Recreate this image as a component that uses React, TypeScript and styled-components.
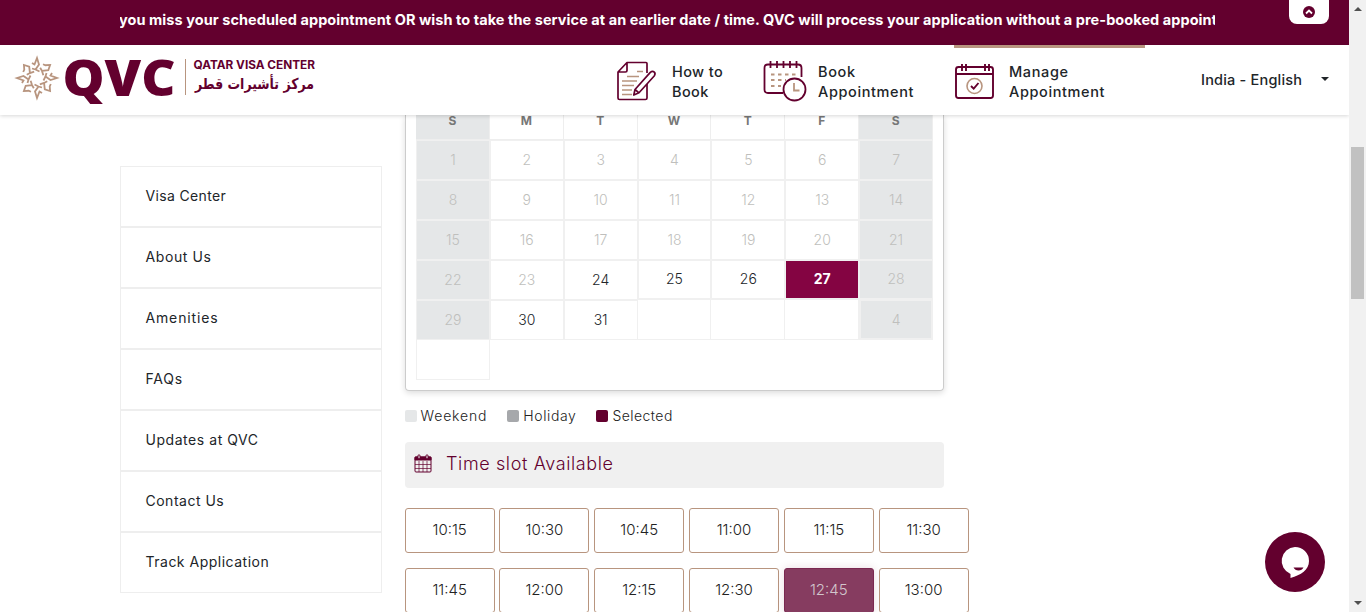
import React from 'react';
import styled, { createGlobalStyle, css } from 'styled-components';

const MAROON = '#63002e';
const TAN = '#b8957f';

const GlobalStyle = createGlobalStyle`
  * { box-sizing: border-box; }
  body {
    margin: 0;
    overflow: hidden;
    background: #fff;
    color: #212529;
    font-family: Inter, "Liberation Sans", sans-serif;
  }
`;

const Window = styled.div`
  display: flex;
  width: 1366px;
  height: 612px;
  overflow: hidden;
`;

const Page = styled.div`
  position: relative;
  display: flex;
  flex-direction: column;
  width: 1349px;
  height: 612px;
  overflow: hidden;
`;

const Banner = styled.div`
  display: flex;
  flex: none;
  height: 45px;
  padding-left: 120px;
  background: ${MAROON};
`;

const Marquee = styled.div`
  width: 1095px;
  height: 40px;
  overflow: hidden;
  white-space: nowrap;
  color: #fff;
  font-size: 14.5px;
  font-weight: 700;
  line-height: 40px;
  letter-spacing: 0.06px;
  text-indent: -1px;
`;

const CollapseButton = styled.button`
  display: flex;
  align-items: center;
  justify-content: center;
  width: 40px;
  height: 24px;
  margin-left: 74px;
  padding: 0;
  border: 0;
  border-radius: 0 0 8px 8px;
  background: #fff;
`;

const Nav = styled.header`
  z-index: 1;
  display: flex;
  flex: none;
  height: 70px;
  padding-left: 14px;
  background: #fff;
  box-shadow: 0 1px 4px rgba(0, 0, 0, 0.16);
`;

const Menu = styled.nav`
  display: flex;
  margin-left: 300px;
`;

const MenuItem = styled.a<{ $width: number; $active?: boolean }>`
  display: flex;
  gap: 11px;
  width: ${(p) => p.$width}px;
  padding-top: ${(p) => (p.$active ? 14 : 17)}px;
  border-top: ${(p) => (p.$active ? `3px solid ${TAN}` : '0')};
  svg { flex: none; margin-top: -3px; }
`;

const MenuLabel = styled.span<{ $spacing?: number }>`
  font-size: 14.5px;
  font-weight: 500;
  line-height: 20px;
  letter-spacing: ${(p) => p.$spacing ?? 0}px;
  white-space: pre;
`;

const Language = styled.div`
  display: flex;
  align-items: center;
  gap: 19px;
  height: 70px;
  margin-left: 56px;
`;

const Caret = styled.i`
  margin-top: -2px;
  border: 4px solid transparent;
  border-top-color: #212529;
  border-bottom: 0;
`;

const Content = styled.main`
  display: flex;
  align-items: flex-start;
  gap: 23px;
  padding-left: 120px;
`;

const Sidebar = styled.aside`
  width: 262px;
  margin-top: 51px;
`;

const SideLink = styled.a<{ $spacing: number }>`
  display: block;
  height: 61px;
  padding-left: 24.5px;
  border: 1px solid #eee;
  font-size: 14px;
  line-height: 58px;
  letter-spacing: ${(p) => p.$spacing}px;
`;

const Booking = styled.section`
  width: 570px;
`;

const CalendarCard = styled.div`
  width: 539px;
  height: 276px;
  padding: 0 10px;
  border: 1px solid #ccc;
  border-top: 0;
  border-radius: 0 0 4px 4px;
  box-shadow: 0 2px 6px rgba(0, 0, 0, 0.14);
`;

const Grid = styled.div`
  display: grid;
  grid-template-columns: repeat(7, 1fr);
  grid-template-rows: 25px repeat(6, 40px);
  width: 517px;
`;

const Weekday = styled.div<{ $weekend?: boolean }>`
  border: solid #eee;
  border-width: 0 1px 1px 0;
  background: ${(p) => (p.$weekend ? '#e5e7e8' : '#fff')};
  color: #777;
  font-size: 12px;
  font-weight: 700;
  line-height: 12px;
  text-align: center;
`;

type Kind = 'off' | 'weekend' | 'open' | 'short' | 'selected' | 'blank' | 'weekendShort' | 'weekendInset' | 'first';

const Day = styled.div<{ $kind: Kind }>`
  height: 40px;
  border: 1px solid #f0f0f0;
  background: #fff;
  color: #bfbfbd;
  font-size: 14px;
  font-weight: 300;
  line-height: 37px;
  text-align: center;
  ${(p) => p.$kind.startsWith('weekend') && css`background: #e5e7e8;`}
  ${(p) => (p.$kind === 'open' || p.$kind === 'short') && css`color: #212529;`}
  ${(p) => (p.$kind === 'short' || p.$kind === 'selected' || p.$kind === 'weekendShort') && css`
    height: 39px;
    line-height: 35px;
  `}
  ${(p) => p.$kind === 'selected' && css`background: #840442; color: #fff; font-weight: 700;`}
  ${(p) => p.$kind === 'weekendInset' && css`
    height: 41px;
    margin-top: -1px;
    border-width: 2px;
  `}
  ${(p) => p.$kind === 'blank' && css`height: 41px; margin-top: -1px; border-left: 0;`}
  ${(p) => p.$kind === 'first' && css`border-top: 0;`}
`;

const Legend = styled.div`
  display: flex;
  gap: 20px;
  height: 20px;
  margin: 15px 0 0 -0.5px;
`;

const LegendItem = styled.span<{ $spacing: number }>`
  display: flex;
  align-items: center;
  gap: 4px;
  height: 19px;
  font-size: 14px;
  font-weight: 300;
  color: #222;
  letter-spacing: ${(p) => p.$spacing}px;
`;

const Swatch = styled.i<{ $color: string }>`
  width: 12px;
  height: 12px;
  border-radius: 2px;
  background: ${(p) => p.$color};
`;

const SlotHeading = styled.h2`
  display: flex;
  align-items: center;
  gap: 14px;
  width: 539px;
  height: 46px;
  margin: 16px 0 20px;
  padding: 0 9px 3px;
  border-radius: 4px;
  background: #f0f0f0;
  color: ${MAROON};
  font-size: 18px;
  font-weight: 300;
  letter-spacing: 0.62px;
`;

const Slots = styled.div`
  display: grid;
  grid-template-columns: repeat(6, 90px);
  gap: 15px 4.8px;
  margin-left: -0.4px;
`;

const Slot = styled.button<{ $selected?: boolean }>`
  height: 45px;
  padding: 0 0 2px;
  border: 1px solid ${TAN};
  border-radius: 3px;
  background: #fff;
  color: #222;
  font: 300 15px Inter, "Liberation Sans", sans-serif;
  ${(p) => p.$selected && css`
    border-color: #7a2850;
    background: #863c60;
    color: #d2c6cc;
    box-shadow: 0 0 10px rgba(99, 0, 46, 0.14);
  `}
`;

const ChatButton = styled.button`
  position: absolute;
  right: 24px;
  bottom: 20px;
  width: 60px;
  height: 60px;
  padding: 0;
  border: 0;
  border-radius: 50%;
  background: ${MAROON};
`;

const Scrollbar = styled.div`
  display: flex;
  flex-direction: column;
  align-items: center;
  width: 17px;
  height: 612px;
  background: #f1f1f1;
`;

const ScrollArrow = styled.i<{ $down?: boolean }>`
  margin-top: ${(p) => (p.$down ? 302 : 7)}px;
  border: 4px solid transparent;
  ${(p) => (p.$down ? 'border-top-color: #505050; border-bottom: 0;' : 'border-bottom-color: #505050; border-top: 0;')}
`;

const Thumb = styled.div`
  width: 13px;
  height: 152px;
  margin-top: 136px;
  background: #c1c1c1;
`;

const Logo = () => (
  <svg width="303" height="70" viewBox="14 45 303 70">
    <g transform="translate(37 78)" fill="none" stroke={TAN} strokeWidth="1.8">
      {[0, 45, 90, 135, 180, 225, 270, 315].map((a) => (
        <path
          key={a}
          transform={`rotate(${a})`}
          d={a % 90 === 0
            ? 'M-5 -15 L-2.500 -13.500 L0 -20 L2 -13.500 L-1.500 -8.500 M-5 -9.500 L-1.500 -8.500 L2.500 -6.500'
            : 'M-5.500 -14 L-3 -15 L0 -18.500 L2.500 -13.500 L-1.500 -8.500 M-5 -9.500 L-1.500 -8.500 L2.500 -6.500'}
        />
      ))}
    </g>
    <text x="62.500" y="96" fill={MAROON} fontFamily="Open Sans, Inter, sans-serif" fontSize="50" fontWeight="800" textLength="113" lengthAdjust="spacingAndGlyphs">QVC</text>
    <path d="M185.5 59V95" stroke={TAN} />
    <text x="193.5" y="69" fill={MAROON} fontSize="11.2" fontWeight="700" textLength="121.5" lengthAdjust="spacingAndGlyphs">QATAR VISA CENTER</text>
    <text x="195" y="88.500" fill={MAROON} fontFamily="DejaVu Sans, sans-serif" fontSize="15" fontWeight="700" textLength="119" lengthAdjust="spacingAndGlyphs">مركز تأشيرات قطر</text>
  </svg>
);

const HowToIcon = () => (
  <svg width="44" height="44" viewBox="2 0 44 44" fill="none" stroke={MAROON} strokeWidth="1.7" strokeLinejoin="round">
    <path d="M32 14V4.5Q32 3.5 31 3.5H12L3 13V39Q3 40.5 4.5 40.5H30.500Q32 40.500 32 39V24M3 13H10.500Q12 13 12 11.500V3.500" />
    <path d="M22 12.500h6M12 17.500h12M7 22h15M7 26.500h12M7 31h10M7 35.500h10" stroke={TAN} strokeWidth="1.400" />
    <path d="M20 30.500L35.300 13.400Q37.500 11.600 39.300 13.200Q40.800 14.800 39.200 17L24 33.800L18.800 36Z M20 30.500l4 3.300" fill="#fff" />
  </svg>
);

const BookIcon = () => (
  <svg width="44" height="45" viewBox="0 0 44 45" fill="none" stroke={MAROON} strokeWidth="1.800">
    <path d="M20 34H5Q1.500 34 1.500 30.500V9Q1.500 5.500 5 5.500H35Q38.500 5.500 38.500 9V18" />
    <path d="M7.500 2v7M14 2v7M20.500 2v7M27 2v7M33.500 2v7" />
    <path d="M8 15.500h25M8 21h15M8 27h10" stroke={TAN} strokeDasharray="3.500 3.500" />
    <circle cx="31.500" cy="30.500" r="11" fill="#fff" />
    <path d="M31 24v7.500h5.500" stroke={TAN} />
  </svg>
);

const ManageIcon = () => (
  <svg width="44" height="44" viewBox="0 0 44 44" fill="none" stroke={MAROON} strokeWidth="1.9">
    <rect x="2" y="8" width="37" height="31" rx="2.500" />
    <path d="M2 15h37M8 5v7M12 5v7M31 5v7M35 5v7" />
    <circle cx="20.500" cy="27" r="7.500" stroke={TAN} strokeWidth="1.600" />
    <path d="M17 27l2.700 2.700L24.500 24" />
  </svg>
);

const CalendarIcon = () => (
  <svg width="18" height="19" viewBox="0 0 18 19" fill="none" stroke={MAROON}>
    <rect x="1" y="3" width="16" height="15" rx="1" />
    <path d="M1 3h16v3H1z" fill={MAROON} />
    <path d="M5 7v11M9 7v11M13 7v11M1 10.500h16M1 14.500h16" strokeWidth="0.700" />
    <rect x="4" y="0.800" width="2" height="4" rx="1" fill="#f0f0f0" />
    <rect x="12" y="0.800" width="2" height="4" rx="1" fill="#f0f0f0" />
  </svg>
);

const sideLinks: [string, number][] = [
  ['Visa Center', 0.35], ['About Us', 0.6], ['Amenities', 0.85], ['FAQs', 0.8],
  ['Updates at QVC', 0.55], ['Contact Us', 0.5], ['Track Application', 0.5],
];

const kindOf = (i: number): Kind => {
  if (i === 24 || i === 25) return 'short';
  if (i === 26) return 'selected';
  if (i === 27) return 'weekendShort';
  if (i === 23 || i === 29 || i === 30) return 'open';
  if (i > 30 && i < 34) return 'blank';
  if (i === 34) return 'weekendInset';
  if (i === 35) return 'first';
  return i % 7 === 0 || i % 7 === 6 ? 'weekend' : 'off';
};

const days = Array.from({ length: 36 }, (_, i) => ({
  kind: kindOf(i),
  label: i < 31 ? String(i + 1) : i === 34 ? '4' : '',
}));

const times = ['10:15', '10:30', '10:45', '11:00', '11:15', '11:30', '11:45', '12:00', '12:15', '12:30', '12:45', '13:00'];

export default function App() {
  return (
    <Window>
      <GlobalStyle />
      <Page>
        <Banner>
          <Marquee>you miss your scheduled appointment OR wish to take the service at an earlier date / time. QVC will process your application without a pre-booked appointment</Marquee>
          <CollapseButton aria-label="Collapse">
            <svg width="12" height="12" viewBox="0 0 12 12">
              <circle cx="6" cy="6" r="6" fill={MAROON} />
              <path d="M3 7.500L6 4.500L9 7.500" fill="none" stroke="#fff" strokeWidth="1.800" />
            </svg>
          </CollapseButton>
        </Banner>
        <Nav>
          <Logo />
          <Menu>
            <MenuItem $width={146}>
              <HowToIcon />
              <MenuLabel $spacing={0.4}>{'How to\nBook'}</MenuLabel>
            </MenuItem>
            <MenuItem $width={191}>
              <BookIcon />
              <MenuLabel $spacing={0.62}>{'Book\nAppointment'}</MenuLabel>
            </MenuItem>
            <MenuItem $width={191} $active>
              <ManageIcon />
              <MenuLabel $spacing={0.62}>{'Manage\nAppointment'}</MenuLabel>
            </MenuItem>
          </Menu>
          <Language>
            <MenuLabel $spacing={0.2}>India - English</MenuLabel>
            <Caret />
          </Language>
        </Nav>
        <Content>
          <Sidebar>
            {sideLinks.map(([label, spacing]) => (
              <SideLink key={label} $spacing={spacing}>{label}</SideLink>
            ))}
          </Sidebar>
          <Booking>
            <CalendarCard>
              <Grid>
                {['S', 'M', 'T', 'W', 'T', 'F', 'S'].map((d, i) => (
                  <Weekday key={i} $weekend={d === 'S'}>{d}</Weekday>
                ))}
                {days.map((d, i) => <Day key={i} $kind={d.kind}>{d.label}</Day>)}
              </Grid>
            </CalendarCard>
            <Legend>
              <LegendItem $spacing={0.85}><Swatch $color="#e5e7e8" />Weekend</LegendItem>
              <LegendItem $spacing={0.6}><Swatch $color="#a6a8ab" />Holiday</LegendItem>
              <LegendItem $spacing={0.45}><Swatch $color={MAROON} />Selected</LegendItem>
            </Legend>
            <SlotHeading><CalendarIcon />Time slot Available</SlotHeading>
            <Slots>
              {times.map((t) => <Slot key={t} $selected={t === '12:45'}>{t}</Slot>)}
            </Slots>
          </Booking>
        </Content>
        <ChatButton aria-label="Chat">
          <svg width="60" height="60" viewBox="0 0 60 60">
            <path d="M30 15a14 14 0 0 1 14 14c0 9-8 14-18.500 17v-4A14 14 0 0 1 30 15z" fill="#fff" />
            <path d="M28.500 35.500h10q-1.500 3-5 3t-5-3z" fill={MAROON} />
          </svg>
        </ChatButton>
      </Page>
      <Scrollbar>
        <ScrollArrow />
        <Thumb />
        <ScrollArrow $down />
      </Scrollbar>
    </Window>
  );
}
